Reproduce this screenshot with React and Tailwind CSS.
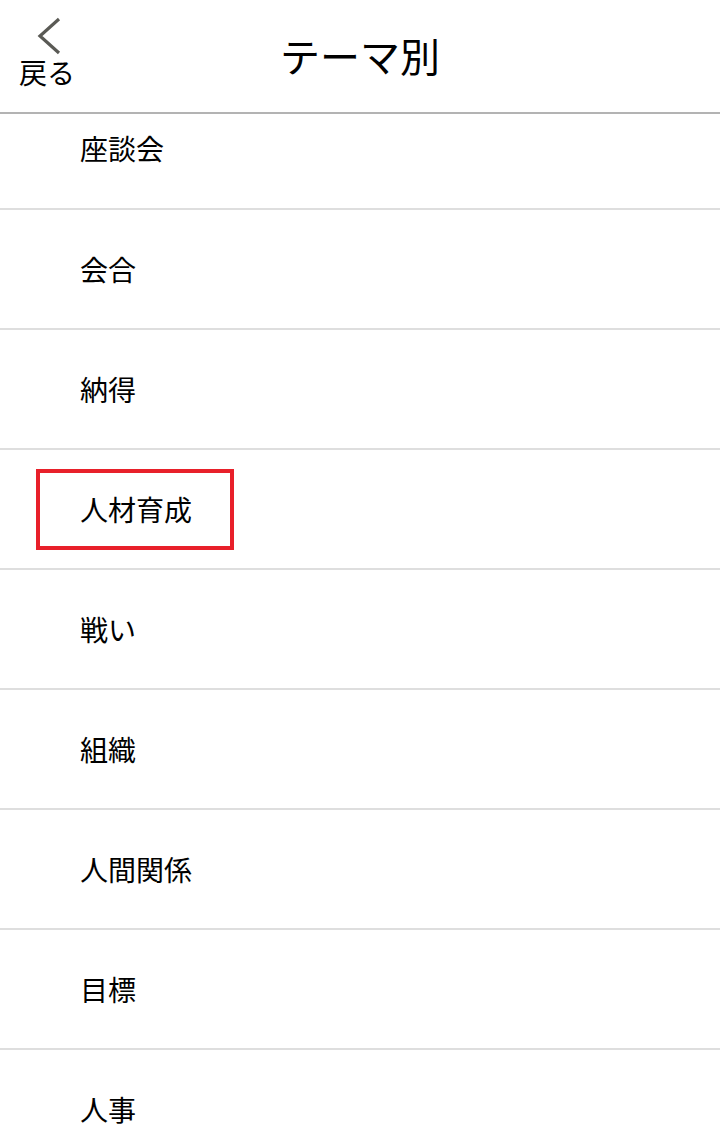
const themes = ['会合', '納得', '人材育成', '戦い', '組織', '人間関係', '目標', '人事']

function App() {
  return (
    <div className="w-[720px] h-[1134px] overflow-hidden bg-white text-black" style={{ fontFamily: '"Noto Sans CJK JP", "Noto Sans", sans-serif' }}>
      <header className="relative h-[114px] border-b-2 border-[#b3b3b3] flex items-center justify-center">
        <button className="absolute left-[19px] top-[17px] flex flex-col items-start">
          <svg width="30" height="40" viewBox="0 0 30 40" className="ml-[15px]">
            <path d="M25 2 L6 19 L25 36" fill="none" stroke="#5a5a55" strokeWidth="3.2" />
          </svg>
          <span className="text-[28px] leading-none mt-[1px]">戻る</span>
        </button>
        <h1 className="text-[40px] leading-none -mt-[2px]">テーマ別</h1>
      </header>
      <ul>
        <li className="h-[96px] border-b-2 border-[#dedede] flex items-center pl-[80px] pb-[26px] text-[28px] leading-none">座談会</li>
        {themes.map((t) => (
          <li key={t} className="relative h-[120px] border-b-2 border-[#dedede] flex items-center pl-[80px] text-[28px] leading-none">
            {t === '人材育成' && (
              <div className="absolute left-[36px] top-[19px] w-[198px] h-[81px] border-4 border-[#e8202a]" />
            )}
            {t}
          </li>
        ))}
      </ul>
    </div>
  )
}

export default App
